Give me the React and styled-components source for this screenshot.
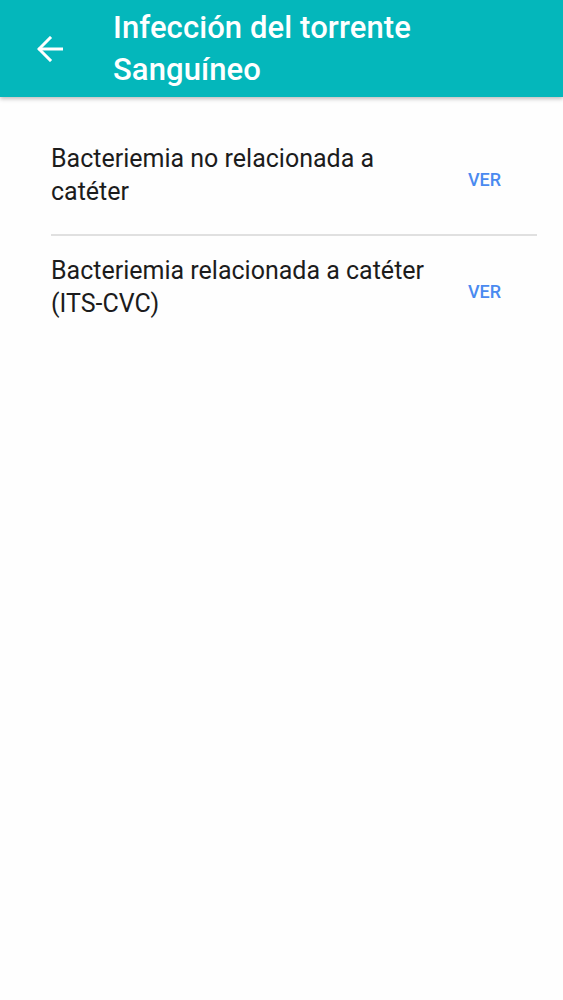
import styled, { createGlobalStyle } from "styled-components";

const GlobalStyle = createGlobalStyle`
  html, body {
    margin: 0;
    padding: 0;
    background: #fefefe;
    font-family: Roboto, "Liberation Sans", sans-serif;
  }
`;

const Page = styled.div`
  width: 563px;
  min-height: 1000px;
  background: #fefefe;
`;

const Toolbar = styled.header`
  display: flex;
  align-items: center;
  height: 97px;
  background: #04b7bb;
  box-shadow: 0 2px 4px rgba(0, 0, 0, 0.25);
  color: #fff;
`;

const BackButton = styled.button`
  display: flex;
  align-items: center;
  justify-content: center;
  width: 26px;
  margin: 1px 50px 0 37px;
  padding: 0;
  border: none;
  background: none;
  color: #fff;
`;

const Title = styled.h1`
  margin: 0;
  font-size: 31px;
  font-weight: 500;
  line-height: 42px;
  letter-spacing: 0.1px;
`;

const List = styled.ul`
  list-style: none;
  margin: 0;
  padding: 0 26px 0 51px;
`;

const Item = styled.li`
  display: flex;
  align-items: center;
  justify-content: space-between;
  padding: ${(p) => (p.$first ? "45px 0 26px" : "18px 0 24px")};
  border-bottom: ${(p) => (p.$last ? "none" : "2px solid #e0e0e0")};
`;

const Label = styled.span`
  font-size: 25px;
  line-height: 33px;
  color: #1c1c1c;
  max-width: 390px;
`;

const VerButton = styled.button`
  margin: 8px 36px 0 0;
  padding: 0;
  border: none;
  background: none;
  font-family: Roboto, "Liberation Sans", sans-serif;
  font-size: 18px;
  font-weight: 500;
  color: #4a8af0;
`;

const items = [
  "Bacteriemia no relacionada a catéter",
  "Bacteriemia relacionada a catéter (ITS-CVC)",
];

export default function App() {
  return (
    <Page>
      <GlobalStyle />
      <Toolbar>
        <BackButton aria-label="Atrás">
          <svg width="26" height="26" viewBox="0 0 26 26" fill="none" stroke="currentColor" strokeWidth="3" strokeLinecap="square">
            <path d="M25 13H3" />
            <path d="M13 2L2 13l11 11" />
          </svg>
        </BackButton>
        <Title>
          Infección del torrente
          <br />
          Sanguíneo
        </Title>
      </Toolbar>
      <List>
        {items.map((text, i) => (
          <Item key={text} $first={i === 0} $last={i === items.length - 1}>
            <Label>{text}</Label>
            <VerButton>VER</VerButton>
          </Item>
        ))}
      </List>
    </Page>
  );
}
